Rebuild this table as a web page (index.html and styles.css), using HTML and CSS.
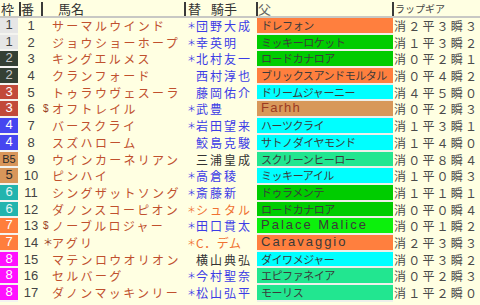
FILE: index.html
```html
<!DOCTYPE html>
<html lang="ja">
<head>
<meta charset="utf-8">
<title>ラップギア</title>
<link rel="stylesheet" href="styles.css">
</head>
<body>
<div class="table">
  <div class="head">
    <div class="hc h-waku">枠</div>
    <div class="hc h-num">番</div>
    <div class="hc h-name">馬名</div>
    <div class="hc h-jockey">替 騎手</div>
    <div class="hc h-sire">父</div>
    <div class="hc h-lap">ラップギア</div>
  </div>

  <div class="row"><div class="waku w1">1</div><div class="num">1</div><div class="mark"></div><div class="name">サーマルウインド</div><div class="jm">＊</div><div class="jockey">団野大成</div><div class="sire s-orange">ドレフォン</div><div class="lap">消２平３瞬３</div></div>
  <div class="row"><div class="waku w1">1</div><div class="num">2</div><div class="mark"></div><div class="name">ジョウショーホープ</div><div class="jm">＊</div><div class="jockey">幸英明</div><div class="sire s-green">ミッキーロケット</div><div class="lap">消１平３瞬２</div></div>
  <div class="row"><div class="waku w2">2</div><div class="num">3</div><div class="mark"></div><div class="name">キングエルメス</div><div class="jm">＊</div><div class="jockey">北村友一</div><div class="sire s-green">ロードカナロア</div><div class="lap">消０平２瞬１</div></div>
  <div class="row"><div class="waku w2">2</div><div class="num">4</div><div class="mark"></div><div class="name">クランフォード</div><div class="jm"></div><div class="jockey">西村淳也</div><div class="sire s-orange">ブリックスアンドモルタル</div><div class="lap">消０平４瞬２</div></div>
  <div class="row"><div class="waku w3">3</div><div class="num">5</div><div class="mark"></div><div class="name">トゥラウヴェスーラ</div><div class="jm"></div><div class="jockey">藤岡佑介</div><div class="sire s-cyan">ドリームジャーニー</div><div class="lap">消４平５瞬０</div></div>
  <div class="row"><div class="waku w3">3</div><div class="num">6</div><div class="mark">$</div><div class="name">オフトレイル</div><div class="jm">＊</div><div class="jockey">武豊</div><div class="sire s-tan latin farhh">Farhh</div><div class="lap">消０平２瞬３</div></div>
  <div class="row"><div class="waku w4">4</div><div class="num">7</div><div class="mark"></div><div class="name">バースクライ</div><div class="jm">＊</div><div class="jockey">岩田望来</div><div class="sire s-cyan">ハーツクライ</div><div class="lap">消１平３瞬１</div></div>
  <div class="row"><div class="waku w4">4</div><div class="num">8</div><div class="mark"></div><div class="name">スズハローム</div><div class="jm"></div><div class="jockey">鮫島克駿</div><div class="sire s-cyan">サトノダイヤモンド</div><div class="lap">消１平４瞬０</div></div>
  <div class="row"><div class="waku w5 small">B5</div><div class="num">9</div><div class="mark"></div><div class="name">ウインカーネリアン</div><div class="jm"></div><div class="jockey dark">三浦皇成</div><div class="sire s-mint">スクリーンヒーロー</div><div class="lap">消０平８瞬４</div></div>
  <div class="row"><div class="waku w5">5</div><div class="num">10</div><div class="mark"></div><div class="name">ピンハイ</div><div class="jm">＊</div><div class="jockey">高倉稜</div><div class="sire s-cyan">ミッキーアイル</div><div class="lap">消１平０瞬３</div></div>
  <div class="row"><div class="waku w6">6</div><div class="num">11</div><div class="mark"></div><div class="name">シングザットソング</div><div class="jm">＊</div><div class="jockey">斎藤新</div><div class="sire s-green">ドゥラメンテ</div><div class="lap">消１平１瞬１</div></div>
  <div class="row"><div class="waku w6">6</div><div class="num">12</div><div class="mark"></div><div class="name">ダノンスコーピオン</div><div class="jm orange">＊</div><div class="jockey orange">シュタル</div><div class="sire s-green">ロードカナロア</div><div class="lap">消０平０瞬４</div></div>
  <div class="row"><div class="waku w7">7</div><div class="num">13</div><div class="mark">$</div><div class="name">ノーブルロジャー</div><div class="jm">＊</div><div class="jockey">田口貫太</div><div class="sire s-lime latin">Palace Malice</div><div class="lap">消０平１瞬２</div></div>
  <div class="row"><div class="waku w7">7</div><div class="num">14</div><div class="mark">＊</div><div class="name">アグリ</div><div class="jm orange">＊</div><div class="jockey orange dem">C．デム</div><div class="sire s-orange latin">Caravaggio</div><div class="lap">消２平３瞬３</div></div>
  <div class="row"><div class="waku w8">8</div><div class="num">15</div><div class="mark"></div><div class="name">マテンロウオリオン</div><div class="jm"></div><div class="jockey dark">横山典弘</div><div class="sire s-cyan">ダイワメジャー</div><div class="lap">消０平３瞬２</div></div>
  <div class="row"><div class="waku w8">8</div><div class="num">16</div><div class="mark"></div><div class="name">セルバーグ</div><div class="jm">＊</div><div class="jockey">今村聖奈</div><div class="sire s-mint">エピファネイア</div><div class="lap">消０平２瞬３</div></div>
  <div class="row"><div class="waku w8">8</div><div class="num">17</div><div class="mark"></div><div class="name">ダノンマッキンリー</div><div class="jm">＊</div><div class="jockey">松山弘平</div><div class="sire s-mint">モーリス</div><div class="lap">消１平２瞬０</div></div>
</div>
</body>
</html>
```

FILE: styles.css
```css
html, body {
  margin: 0;
  padding: 0;
}
body {
  width: 480px;
  height: 305px;
  overflow: hidden;
  background: #ffffe2;
  font-family: "Noto Sans CJK JP", sans-serif;
}
.table {
  width: 480px;
}

/* header */
.head {
  display: flex;
  align-items: flex-start;
  height: 16px;
  border-bottom: 2px solid #c8c8c4;
}
.hc {
  box-sizing: border-box;
  height: 14px;
  margin-top: 2px;
  border-left: 2px solid #3a3a3a;
  font-size: 13px;
  line-height: 14px;
  color: #333;
  white-space: nowrap;
}
.h-waku {
  width: 19px;
  border-left: none;
  padding-left: 1px;
}
.h-num {
  width: 22px;
}
.h-name {
  width: 143px;
  padding-left: 15px;
}
.h-jockey {
  width: 72px;
  padding-left: 2px;
  word-spacing: 7px;
}
.h-sire {
  width: 136px;
  color: #666;
}
.h-lap {
  flex: 1;
  padding-left: 1px;
  font-size: 10px;
  color: #444;
}

/* rows */
.row {
  display: flex;
  height: 16.7px;
  white-space: nowrap;
}
.waku {
  box-sizing: border-box;
  width: 18px;
  margin-right: 2px;
  border-bottom: 2px solid #f4f4f0;
  text-align: center;
  font-family: "Liberation Sans", sans-serif;
  font-size: 13px;
  line-height: 14.7px;
  color: #fff;
}
.waku.small {
  font-size: 11px;
}
.w1 { background: #e6e6e6; color: #444; }
.w2 { background: #344034; color: #c8c8c8; }
.w3 { background: #c24a3a; }
.w4 { background: #4646f0; }
.w5 { background: #d8965a; color: #2a2a2a; }
.w6 { background: #22b4ae; color: #e4f4f4; }
.w7 { background: #ff7e3c; }
.w8 { background: #ff10ff; }

.num {
  width: 22px;
  text-align: center;
  font-family: "Liberation Sans", sans-serif;
  font-size: 13px;
  line-height: 16.7px;
  color: #444;
}
.mark {
  width: 10px;
  padding-left: 1px;
  box-sizing: border-box;
  font-size: 10px;
  line-height: 16.7px;
  color: #9a4026;
  font-family: "Liberation Sans", "Noto Sans CJK JP", sans-serif;
}
.name {
  width: 132px;
  overflow: hidden;
  font-size: 12px;
  letter-spacing: 2.3px;
  line-height: 16.7px;
  color: #c0502e;
}
.jm {
  box-sizing: border-box;
  width: 12px;
  padding-left: 3px;
  font-size: 9px;
  line-height: 16.7px;
  color: #3c3ce6;
}
.jockey {
  width: 60px;
  overflow: hidden;
  font-size: 12px;
  letter-spacing: 2px;
  line-height: 16.7px;
  color: #3c3ce6;
}
.jockey.dark { color: #333; }
.orange { color: #f07232; }
.jockey.dem {
  letter-spacing: 0.5px;
}

.sire {
  box-sizing: border-box;
  width: 136px;
  margin-left: 1px;
  padding-left: 4px;
  border-bottom: 2px solid #efefea;
  overflow: hidden;
  font-size: 11px;
  letter-spacing: -0.45px;
  line-height: 14.7px;
  color: #3a3a3a;
}
.sire.latin {
  font-family: "Liberation Sans", sans-serif;
  font-size: 13px;
  letter-spacing: 2px;
}
.sire.farhh {
  color: #9a3a22;
  letter-spacing: 1.2px;
}
.s-orange { background: #ff7f3e; }
.s-green { background: #00cc00; }
.s-cyan { background: #00ffff; }
.s-tan { background: #d8985a; }
.s-mint { background: #22e690; }
.s-lime { background: #0cf00c; }

.lap {
  flex: 1;
  padding-left: 1px;
  overflow: hidden;
  font-size: 12px;
  letter-spacing: 2.2px;
  line-height: 16.7px;
  color: #4a4a4a;
}
```
